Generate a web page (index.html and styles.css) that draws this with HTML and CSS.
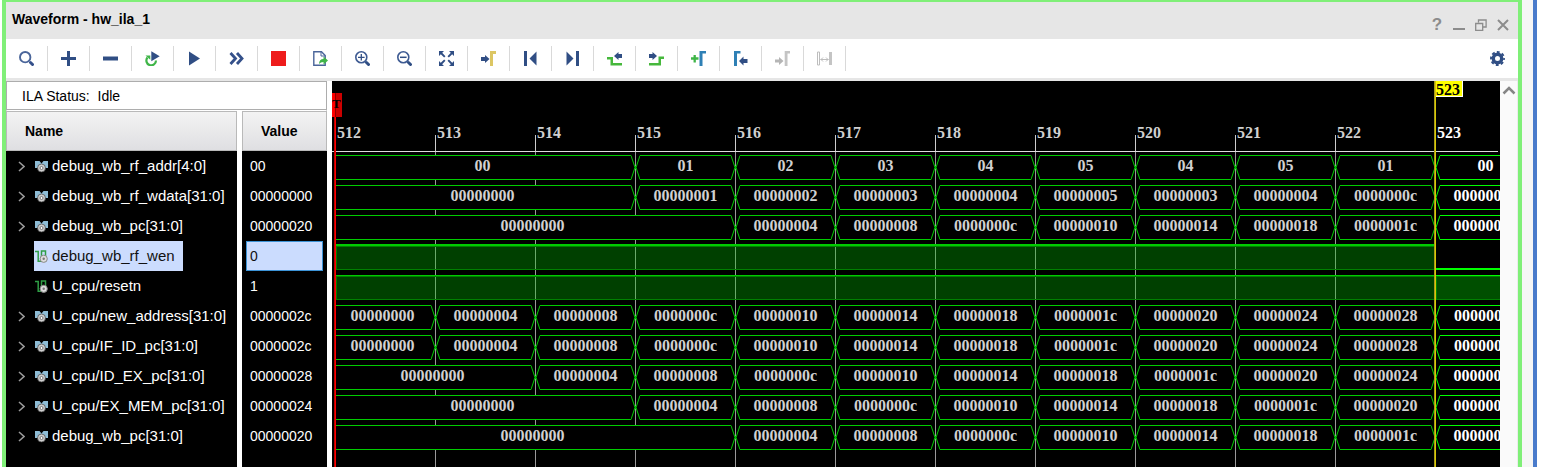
FILE: index.html
```html
<!DOCTYPE html>
<html lang="en">
<head>
<meta charset="utf-8">
<title>Waveform - hw_ila_1</title>
<link rel="stylesheet" href="styles.css">
</head>
<body>
<main class="frame">
  <header class="titlebar">
    <h1 class="title">Waveform - hw_ila_1</h1>
    <div class="window-controls">
      <button class="control help" aria-label="Help">?</button>
      <button class="control" aria-label="Minimize"><svg width="12" height="12"><path d="M0 10h12" stroke="#8c8c8c" stroke-width="2"/></svg></button>
      <button class="control" aria-label="Restore"><svg width="12" height="12" fill="none" stroke="#8c8c8c" stroke-width="1.3"><path d="M3.5 3.5V1h7.6v7H8M.7 4.5h7v6.8h-7z"/></svg></button>
      <button class="control" aria-label="Close"><svg width="12" height="12"><path d="M1 1l10 10M11 1L1 11" stroke="#8c8c8c" stroke-width="2"/></svg></button>
    </div>
  </header>

  <nav class="toolbar" aria-label="Waveform tools">
    <button class="tool" aria-label="Search"><svg class="icon"><circle cx="6.2" cy="6.2" r="5.2" fill="none" stroke="#4a659a" stroke-width="1.9"/><path d="M11.500 11.500l2 2" stroke="#34508a" stroke-width="3" stroke-linecap="round"/></svg></button>
    <button class="tool" aria-label="Zoom in step"><svg class="icon"><path d="M6 0h3v6h6v3H9v6H6V9H0V6h6z" fill="#304e84"/></svg></button>
    <button class="tool" aria-label="Zoom out step"><svg class="icon"><path d="M0 5.500h15v4H0z" fill="#304e84"/></svg></button>
    <button class="tool" aria-label="Auto re-trigger"><svg class="icon"><path d="M2.500 6.500A4.800 4.800 0 1 0 11 9.500" fill="none" stroke="#3fb548" stroke-width="2.200"/><path d="M.5 4.500h4.800v4.300z" fill="#3fb548"/><path d="M6.300 .3L14.700 5.300 6.300 10.300z" fill="#304e84"/></svg></button>
    <button class="tool" aria-label="Run trigger"><svg class="icon"><path d="M2 .5L13 7.500 2 14.500z" fill="#304e84"/></svg></button>
    <button class="tool" aria-label="Run immediate"><svg class="icon"><path d="M1.500 2l5 5.500-5 5.500M8 2l5 5.500L8 13" fill="none" stroke="#34508a" stroke-width="2.800"/></svg></button>
    <button class="tool" aria-label="Stop"><svg class="icon"><path d="M0 0h15v15H0z" fill="#ee1c1c"/></svg></button>
    <button class="tool" aria-label="Export data"><svg class="icon"><path d="M.8.8h7.700l3.700 3.700v9.700H.8z" fill="#fff" stroke="#4a659a" stroke-width="1.400"/><path d="M8 .8v4.200h4.200" fill="none" stroke="#4a659a"/><path d="M6 13c.3-3.500 1.500-5 4.500-5V5.500l4.500 4-4.500 4V11C8.500 11 7.300 11.700 6 13z" fill="#3fb548"/></svg></button>
    <button class="tool" aria-label="Zoom in"><svg class="icon"><circle cx="6.300" cy="6.300" r="5.500" fill="none" stroke="#3d5a92" stroke-width="1.600"/><path d="M3 6.300h6.600M6.300 3v6.600" stroke="#304e84" stroke-width="1.300"/><path d="M11.500 11.500l2 2" stroke="#304e84" stroke-width="3" stroke-linecap="round"/></svg></button>
    <button class="tool" aria-label="Zoom out"><svg class="icon"><circle cx="6.300" cy="6.300" r="5.500" fill="none" stroke="#3d5a92" stroke-width="1.600"/><path d="M3 6.300h6.600" stroke="#304e84" stroke-width="1.500"/><path d="M11.500 11.500l2 2" stroke="#304e84" stroke-width="3" stroke-linecap="round"/></svg></button>
    <button class="tool" aria-label="Zoom fit"><svg class="icon"><path d="M0 0h5L0 5zM15 0h-5l5 5zM0 15h5l-5-5zM15 15h-5l5-5z" fill="#304e84"/><path d="M2 2l3.800 3.800M13 2L9.200 5.800M2 13l3.800-3.800M13 13L9.200 9.200" stroke="#304e84" stroke-width="1.900"/></svg></button>
    <button class="tool" aria-label="Go to trigger"><svg class="icon"><path d="M0 6h4V4l4.500 4L4 12v-2H0z" fill="#304e84"/><path d="M9 0h6v3h-3v12H9z" fill="#dcc663"/></svg></button>
    <button class="tool" aria-label="Go to start"><svg class="icon"><path d="M1 0h3v15H1zM13.500.5v14L6.500 7.500z" fill="#304e84"/></svg></button>
    <button class="tool" aria-label="Go to end"><svg class="icon"><path d="M11 0h3v15h-3zM1.500.5v14L8.500 7.500z" fill="#304e84"/></svg></button>
    <button class="tool" aria-label="Previous transition"><svg class="icon"><path d="M0 6h6v6h9v2.500H3.500V8.500H0z" fill="#46b83c"/><path d="M15 3h-3.500V1L7 5l4.500 4V7H15z" fill="#304e84"/></svg></button>
    <button class="tool" aria-label="Next transition"><svg class="icon"><path d="M15 5.500H9.500V12H0v2.500h12V8h3z" fill="#46b83c"/><path d="M0 3h3.500V1L8 5 3.500 9V7H0z" fill="#304e84"/></svg></button>
    <button class="tool" aria-label="Add marker"><svg class="icon"><path d="M0 7.500h7.500M3.700 4v7.500" stroke="#3fb548" stroke-width="2.300"/><path d="M8.500 0H15v2.500h-3.500V15h-3z" fill="#2f80b5"/></svg></button>
    <button class="tool" aria-label="Previous marker"><svg class="icon"><path d="M1 0h6.500v2.500H4V15H1z" fill="#2f80b5"/><path d="M14.500 8H10.500V5.500L6 10l4.500 4.500V12h4z" fill="#304e84"/></svg></button>
    <button class="tool" aria-label="Next marker"><svg class="icon"><path d="M0 8.500h4V6l4.500 4L4 14v-2.500H0z" fill="#b5b5b5"/><path d="M9.700 0H15v2.500h-2.500V15H9.700z" fill="#c4c4c4"/></svg></button>
    <button class="tool" aria-label="Swap cursors"><svg class="icon"><path d="M.5 1h2v13h-2z" fill="none" stroke="#bdbdbd"/><path d="M12 1h3v13h-3z" fill="#c4c4c4"/><path d="M3.500 8.500h8M6 6.500l-2 2 2 2M9 6.500l2 2-2 2" fill="none" stroke="#bdbdbd"/></svg></button>
    <button class="tool settings" aria-label="Settings"><svg class="icon"><circle cx="7.500" cy="7.500" r="4.200" fill="none" stroke="#304e84" stroke-width="3.400"/><circle cx="7.500" cy="7.500" r="6.500" fill="none" stroke="#304e84" stroke-width="1.900" stroke-dasharray="2.900 2.205" stroke-dashoffset="1.450"/></svg></button>
  </nav>

  <section class="workspace">
    <div class="signals">
      <p class="status">ILA Status:&nbsp; Idle</p>
      <table class="signal-table">
        <thead><tr><th class="name-col"><span class="heading">Name</span></th><th class="value-col"><span class="heading">Value</span></th></tr></thead>
        <tbody>
          <tr><td><div class="signal"><button class="expand" aria-label="Expand"><svg width="7" height="11"><use href="#chevron"/></svg></button><span class="label"><svg class="kind"><use href="#bus"/></svg>debug_wb_rf_addr[4:0]</span></div></td><td><span class="value">00</span></td></tr>
          <tr><td><div class="signal"><button class="expand" aria-label="Expand"><svg width="7" height="11"><use href="#chevron"/></svg></button><span class="label"><svg class="kind"><use href="#bus"/></svg>debug_wb_rf_wdata[31:0]</span></div></td><td><span class="value">00000000</span></td></tr>
          <tr><td><div class="signal"><button class="expand" aria-label="Expand"><svg width="7" height="11"><use href="#chevron"/></svg></button><span class="label"><svg class="kind"><use href="#bus"/></svg>debug_wb_pc[31:0]</span></div></td><td><span class="value">00000020</span></td></tr>
          <tr class="selected"><td><div class="signal"><span class="expand"></span><span class="label"><svg class="kind"><use href="#wire"/></svg>debug_wb_rf_wen</span></div></td><td><span class="value">0</span></td></tr>
          <tr><td><div class="signal"><span class="expand"></span><span class="label"><svg class="kind"><use href="#wire"/></svg>U_cpu/resetn</span></div></td><td><span class="value">1</span></td></tr>
          <tr><td><div class="signal"><button class="expand" aria-label="Expand"><svg width="7" height="11"><use href="#chevron"/></svg></button><span class="label"><svg class="kind"><use href="#bus"/></svg>U_cpu/new_address[31:0]</span></div></td><td><span class="value">0000002c</span></td></tr>
          <tr><td><div class="signal"><button class="expand" aria-label="Expand"><svg width="7" height="11"><use href="#chevron"/></svg></button><span class="label"><svg class="kind"><use href="#bus"/></svg>U_cpu/IF_ID_pc[31:0]</span></div></td><td><span class="value">0000002c</span></td></tr>
          <tr><td><div class="signal"><button class="expand" aria-label="Expand"><svg width="7" height="11"><use href="#chevron"/></svg></button><span class="label"><svg class="kind"><use href="#bus"/></svg>U_cpu/ID_EX_pc[31:0]</span></div></td><td><span class="value">00000028</span></td></tr>
          <tr><td><div class="signal"><button class="expand" aria-label="Expand"><svg width="7" height="11"><use href="#chevron"/></svg></button><span class="label"><svg class="kind"><use href="#bus"/></svg>U_cpu/EX_MEM_pc[31:0]</span></div></td><td><span class="value">00000024</span></td></tr>
          <tr><td><div class="signal"><button class="expand" aria-label="Expand"><svg width="7" height="11"><use href="#chevron"/></svg></button><span class="label"><svg class="kind"><use href="#bus"/></svg>debug_wb_pc[31:0]</span></div></td><td><span class="value">00000020</span></td></tr>
        </tbody>
      </table>
    </div>

    <div class="wave">
      <div class="ruler">
        <span class="tick origin">512</span><span class="tick">513</span><span class="tick">514</span><span class="tick">515</span><span class="tick">516</span><span class="tick">517</span><span class="tick">518</span><span class="tick">519</span><span class="tick">520</span><span class="tick">521</span><span class="tick">522</span><span class="tick now">523</span>
      </div>
      <div class="traces">
        <div class="trace"><span class="seg n3">00</span><span class="seg">01</span><span class="seg">02</span><span class="seg">03</span><span class="seg">04</span><span class="seg">05</span><span class="seg">04</span><span class="seg">05</span><span class="seg">01</span><span class="seg now">00</span></div>
        <div class="trace"><span class="seg n3">00000000</span><span class="seg">00000001</span><span class="seg">00000002</span><span class="seg">00000003</span><span class="seg">00000004</span><span class="seg">00000005</span><span class="seg">00000003</span><span class="seg">00000004</span><span class="seg">0000000c</span><span class="seg now">00000000</span></div>
        <div class="trace"><span class="seg n4">00000000</span><span class="seg">00000004</span><span class="seg">00000008</span><span class="seg">0000000c</span><span class="seg">00000010</span><span class="seg">00000014</span><span class="seg">00000018</span><span class="seg">0000001c</span><span class="seg now">00000020</span></div>
        <div class="trace"><span class="level high thick n11"></span><span class="level low now"></span></div>
        <div class="trace"><span class="level high n11"></span><span class="level high now"></span></div>
        <div class="trace"><span class="seg">00000000</span><span class="seg">00000004</span><span class="seg">00000008</span><span class="seg">0000000c</span><span class="seg">00000010</span><span class="seg">00000014</span><span class="seg">00000018</span><span class="seg">0000001c</span><span class="seg">00000020</span><span class="seg">00000024</span><span class="seg">00000028</span><span class="seg now">0000002c</span></div>
        <div class="trace"><span class="seg">00000000</span><span class="seg">00000004</span><span class="seg">00000008</span><span class="seg">0000000c</span><span class="seg">00000010</span><span class="seg">00000014</span><span class="seg">00000018</span><span class="seg">0000001c</span><span class="seg">00000020</span><span class="seg">00000024</span><span class="seg">00000028</span><span class="seg now">0000002c</span></div>
        <div class="trace"><span class="seg n2">00000000</span><span class="seg">00000004</span><span class="seg">00000008</span><span class="seg">0000000c</span><span class="seg">00000010</span><span class="seg">00000014</span><span class="seg">00000018</span><span class="seg">0000001c</span><span class="seg">00000020</span><span class="seg">00000024</span><span class="seg now">00000028</span></div>
        <div class="trace"><span class="seg n3">00000000</span><span class="seg">00000004</span><span class="seg">00000008</span><span class="seg">0000000c</span><span class="seg">00000010</span><span class="seg">00000014</span><span class="seg">00000018</span><span class="seg">0000001c</span><span class="seg">00000020</span><span class="seg now">00000024</span></div>
        <div class="trace"><span class="seg n4">00000000</span><span class="seg">00000004</span><span class="seg">00000008</span><span class="seg">0000000c</span><span class="seg">00000010</span><span class="seg">00000014</span><span class="seg">00000018</span><span class="seg">0000001c</span><span class="seg now">00000020</span></div>
      </div>
      <div class="trigger-line"></div>
      <div class="trigger-flag">T</div>
      <div class="cursor-line"></div>
      <div class="cursor-flag">523</div>
    </div>

    <div class="scroll-track"><button class="scroll-up" aria-label="Scroll up"><svg width="14" height="10"><path d="M1.500 8.500L7 3l5.500 5.500" fill="none" stroke="#858585" stroke-width="2.500"/></svg></button></div>
  </section>
</main>
<aside class="edge"></aside>

<svg class="defs" aria-hidden="true">
  <symbol id="chevron" viewBox="0 0 7 11"><path d="M1 1l5 4.500L1 10" fill="none" stroke="#9a9a9a" stroke-width="1.600"/></symbol>
  <symbol id="bus" viewBox="0 0 13 13"><path d="M0 1h4.500l2 2.500 2-2.500H13v7H0z" fill="#8fbdd6"/><circle cx="6.500" cy="8" r="4" fill="#cfcfcf" stroke="#444" stroke-width=".7"/><circle cx="6.500" cy="8" r="1.500" fill="#fff" stroke="#777"/></symbol>
  <symbol id="wire" viewBox="0 0 13 13"><path d="M0 1.500h3.200v9.800H6.500V1h4v5" fill="none" stroke="#2f9e45" stroke-width="1.500"/><circle cx="8.700" cy="8.800" r="3.600" fill="#ddd" stroke="#888"/><circle cx="8.700" cy="8.800" r="1.200" fill="#777"/></symbol>
</svg>
</body>
</html>
```

FILE: styles.css
```css
* {
  box-sizing: border-box;
}

body {
  margin: 0;
  padding-left: 2px;
  padding-right: 4px;
  height: 100vh;
  display: flex;
  overflow: hidden;
  background: #fff;
  font: 14px/20px "Liberation Sans", Arial, sans-serif;
  color: #000;
}

button {
  display: flex;
  align-items: center;
  justify-content: center;
  margin: 0;
  padding: 0;
  border: 0;
  background: none;
  font: inherit;
  color: inherit;
}

svg {
  display: block;
  flex: none;
}

.defs {
  display: none;
}

.frame {
  flex: 1;
  min-width: 0;
  display: flex;
  flex-direction: column;
  border: 4px solid #80ef78;
  border-top-width: 2px;
  border-bottom: 0;
  background: #e6e6e6;
}

.edge {
  width: 15px;
  background: #f6f6f6;
  border-right: 4px solid #4a7bcb;
}

/* Title bar */
.titlebar {
  flex: none;
  height: 37px;
  display: flex;
  justify-content: space-between;
  padding: 0 4px 0 6px;
}

.title {
  margin: 0;
  font-size: 14px;
  font-weight: bold;
  line-height: 34px;
}

.window-controls {
  display: flex;
  padding-top: 8px;
}

.control {
  width: 22px;
  height: 29px;
}

.help {
  font-size: 17px;
  font-weight: bold;
  color: #8c8c8c;
}

/* Toolbar */
.toolbar {
  flex: none;
  height: 39px;
  margin-bottom: 3px;
  display: flex;
  align-items: center;
  background: #fff;
}

.tool {
  width: 42px;
  height: 25px;
  border-right: 1px solid #d9d9d9;
}

.icon {
  width: 15px;
  height: 15px;
}

.settings {
  margin-left: auto;
  border-right: 0;
}

/* Workspace */
.workspace {
  flex: 1;
  min-height: 0;
  display: flex;
  background: #fff;
}

.signals {
  flex: none;
  width: 321px;
  margin-right: 5px;
  background: linear-gradient(to right, #000 231px, #fff 231px, #fff 236px, #000 236px);
}

.status {
  margin: 0;
  height: 30px;
  padding-left: 15px;
  line-height: 28px;
  border: 1px solid #adadad;
  border-bottom-color: #fff;
  box-shadow: inset 0 -1px #adadad;
  background: #fff;
}

.signal-table {
  width: 100%;
  table-layout: fixed;
  border-spacing: 0;
}

th,
td {
  padding: 0;
  text-align: left;
}

th {
  background: #fff;
}

.name-col {
  width: 236px;
  padding-right: 5px;
}

.heading {
  display: block;
  height: 40px;
  padding-left: 18px;
  line-height: 38px;
  border: 1px solid #b9b9b9;
  background: linear-gradient(#f3f3f3, #dfdfe2);
}

td {
  height: 30px;
  color: #fff;
}

.signal {
  display: flex;
  align-items: center;
  padding-left: 12px;
}

.expand {
  width: 16px;
  justify-content: start;
}

.label {
  height: 30px;
  display: flex;
  align-items: center;
  gap: 4px;
  padding: 0 8px 0 1px;
  font-size: 15px;
}

.kind {
  width: 13px;
  height: 13px;
}

.value {
  display: block;
  height: 30px;
  margin: 0 4px;
  padding-left: 3px;
  line-height: 28px;
  border: 1px solid transparent;
}

.selected .label,
.selected .value {
  background: #cbdcfe;
  color: #111;
}

.selected .value {
  border-color: #3c93d6;
}

/* Waveform canvas: one clock cycle is 100px wide */
.wave {
  position: relative;
  flex: 1;
  min-width: 0;
  display: flex;
  flex-direction: column;
  overflow: hidden;
  background: #000;
  color: #d0d0d0;
  font: bold 16px/22px "Liberation Serif", "Times New Roman", serif;
}

.ruler {
  flex: none;
  display: flex;
  height: 71px;
  margin-right: 2px;
  padding: 41px 0 0 3px;
  border-bottom: 1px solid #ddd;
  overflow: hidden;
}

.tick {
  flex: none;
  width: 100px;
  padding-left: 2px;
  background: linear-gradient(#ccc, #ccc) 0 13px / 1px 16px no-repeat;
}

.traces {
  flex: 1;
  display: flex;
  flex-direction: column;
  gap: 5px;
  padding: 3px 0 0 4px;
  background: repeating-linear-gradient(to right, #999 0, #999 1px, transparent 1px, transparent 100px) 3px 0;
}

.trace {
  flex: none;
  height: 25px;
  display: flex;
  align-items: flex-end;
  gap: 1px;
}

.seg,
.level {
  --cycles: 1;
  flex: none;
  width: calc(var(--cycles) * 100px - 1px);
  height: 25px;
}

.n2 { --cycles: 2; }
.n3 { --cycles: 3; }
.n4 { --cycles: 4; }
.n11 { --cycles: 11; }

.seg {
  --line: #00cc00;
  --open: url("data:image/svg+xml,%3Csvg xmlns='http://www.w3.org/2000/svg' width='4' height='25'%3E%3Cpath d='M4 .5L0 12.500L4 24.500' fill='none' stroke='%2300cc00'/%3E%3C/svg%3E");
  --close: url("data:image/svg+xml,%3Csvg xmlns='http://www.w3.org/2000/svg' width='4' height='25'%3E%3Cpath d='M0 .5L4 12.500L0 24.500' fill='none' stroke='%2300cc00'/%3E%3C/svg%3E");
  position: relative;
  text-align: center;
  background:
    var(--open) left top no-repeat,
    var(--close) right top no-repeat,
    linear-gradient(var(--line), var(--line)) 4px 0 / calc(100% - 8px) 1px no-repeat,
    linear-gradient(var(--line), var(--line)) 4px 100% / calc(100% - 8px) 1px no-repeat,
    #000;
}

.seg:first-child {
  padding-right: 6px;
  background:
    var(--close) right top no-repeat,
    linear-gradient(var(--line), var(--line)) 0 0 / calc(100% - 4px) 1px no-repeat,
    linear-gradient(var(--line), var(--line)) 0 100% / calc(100% - 4px) 1px no-repeat,
    #000;
}

.seg + .seg::before {
  content: "";
  position: absolute;
  left: -1px;
  top: 11px;
  width: 1px;
  height: 3px;
  background: var(--line);
}

.now {
  color: #fff;
}

.seg.now {
  --line: #00ff00;
  --open: url("data:image/svg+xml,%3Csvg xmlns='http://www.w3.org/2000/svg' width='4' height='25'%3E%3Cpath d='M4 .5L0 12.500L4 24.500' fill='none' stroke='%2300ff00'/%3E%3C/svg%3E");
}

.high {
  border-top: 1px solid #00cc00;
  box-shadow: inset 0 0 0 1px #008000;
  background: rgba(0, 213, 0, 0.3);
}

.thick {
  height: 26px;
  border-top-width: 2px;
}

.high.now {
  border-top-color: #00ff00;
  background: rgba(0, 255, 0, 0.31);
}

.low {
  border-bottom: 2px solid #00ff00;
}

/* Trigger and cursor overlays */
.trigger-line {
  position: absolute;
  top: 12px;
  bottom: 0;
  left: 2px;
  width: 2px;
  background: linear-gradient(to right, #c00000 1px, #ff0000 1px);
}

.trigger-flag {
  position: absolute;
  top: 12px;
  left: 0;
  width: 10px;
  height: 24px;
  color: #000;
  font-size: 13px;
  background: linear-gradient(to right, #ff0000 3px, #8b0000 3px, #8b0000 4px, #cc0000 4px);
}

.cursor-line {
  position: absolute;
  top: 0;
  bottom: 0;
  left: 1102px;
  width: 2px;
  background: linear-gradient(to right, #a89c20 1px, #d8c800 1px);
}

.cursor-flag {
  position: absolute;
  top: 0;
  left: 1104px;
  width: 27px;
  height: 16px;
  line-height: 18px;
  color: #000;
  background: #ffff00;
  border: solid #fff;
  border-width: 0 1px 1px 0;
}

.scroll-track {
  flex: none;
  width: 18px;
  background: #fafafa;
  border-right: 1px solid #ececec;
}

.scroll-up {
  width: 18px;
  height: 18px;
}
```
